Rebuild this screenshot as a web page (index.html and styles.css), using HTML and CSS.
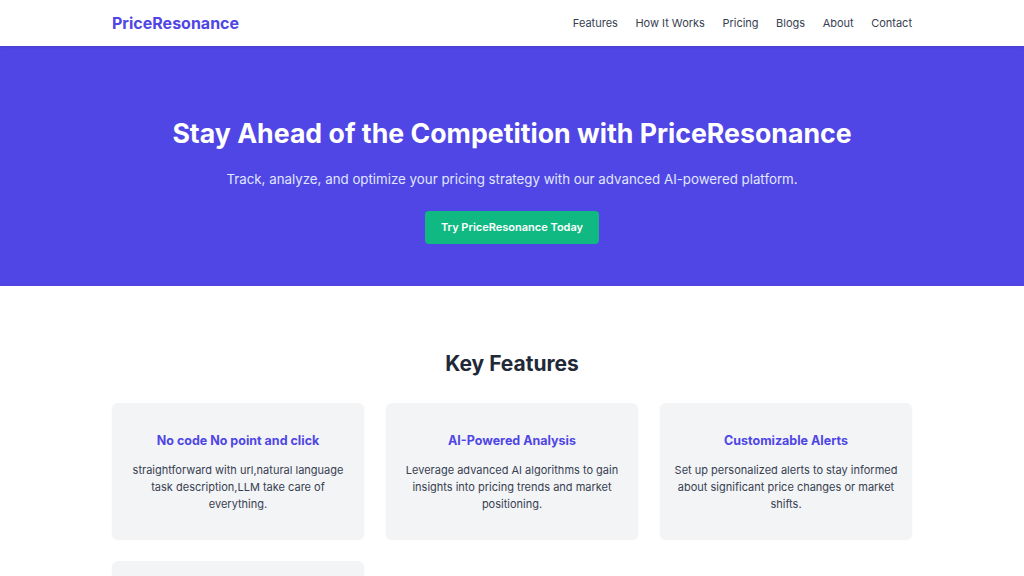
FILE: index.html
```html
<!DOCTYPE html>
<html lang="en">
<head>
  <meta charset="UTF-8">
  <meta name="viewport" content="width=device-width, initial-scale=1.0">
  <title>PriceResonance</title>
  <link rel="stylesheet" href="styles.css">
</head>
<body>
  <header class="site-header">
    <div class="container nav-bar">
      <a class="logo" href="#">PriceResonance</a>
      <nav class="nav-links">
        <a href="#">Features</a>
        <a href="#">How It Works</a>
        <a href="#">Pricing</a>
        <a href="#">Blogs</a>
        <a href="#">About</a>
        <a href="#">Contact</a>
      </nav>
    </div>
  </header>

  <section class="hero">
    <h1>Stay Ahead of the Competition with PriceResonance</h1>
    <p>Track, analyze, and optimize your pricing strategy with our advanced AI-powered platform.</p>
    <a class="cta-btn" href="#">Try PriceResonance Today</a>
  </section>

  <section class="features">
    <div class="container">
      <h2>Key Features</h2>
      <div class="feature-grid">
        <div class="feature-card">
          <h3>No code No point and click</h3>
          <p>straightforward with url,natural language task description,LLM take care of everything.</p>
        </div>
        <div class="feature-card">
          <h3>AI-Powered Analysis</h3>
          <p>Leverage advanced AI algorithms to gain insights into pricing trends and market positioning.</p>
        </div>
        <div class="feature-card">
          <h3>Customizable Alerts</h3>
          <p>Set up personalized alerts to stay informed about significant price changes or market shifts.</p>
        </div>
        <div class="feature-card">
          <h3>Competitor Tracking</h3>
          <p>Monitor competitor prices across channels and get a clear view of the market.</p>
        </div>
      </div>
    </div>
  </section>
</body>
</html>
```

FILE: styles.css
```css
* {
  box-sizing: border-box;
}
body {
  margin: 0;
  font-family: Inter, "Noto Sans", sans-serif;
  color: #374151;
  background-color: #fff;
}
a {
  text-decoration: none;
}
.container {
  max-width: 800px;
  margin: 0 auto;
}
.site-header {
  background-color: #fff;
  box-shadow: 0 1px 3px rgba(0, 0, 0, 0.12);
  position: relative;
  z-index: 1;
}
.nav-bar {
  height: 46px;
  display: flex;
  justify-content: space-between;
  align-items: center;
}
.logo {
  font-size: 16px;
  font-weight: 700;
  color: #4f46e5;
}
.nav-links {
  display: flex;
  gap: 17.5px;
}
.nav-links a {
  font-size: 11px;
  color: #374151;
}
.hero {
  background-color: #4f46e5;
  color: #fff;
  text-align: center;
  height: 240px;
  padding-top: 70px;
}
.hero h1 {
  margin: 0;
  font-size: 26.7px;
  font-weight: 700;
  line-height: 34px;
}
.hero p {
  margin: 20px 0 0;
  font-size: 13.3px;
  line-height: 18px;
  color: #e0e7ff;
}
.cta-btn {
  display: inline-block;
  margin-top: 23px;
  padding: 0 16px;
  height: 33px;
  line-height: 33px;
  background-color: #10b981;
  color: #fff;
  font-size: 11px;
  font-weight: 600;
  border-radius: 4px;
}
.features {
  padding-top: 64px;
}
.features h2 {
  margin: 0 0 25px;
  text-align: center;
  font-size: 21px;
  font-weight: 700;
  color: #1f2937;
  line-height: 28px;
}
.feature-grid {
  display: grid;
  grid-template-columns: repeat(3, 1fr);
  gap: 22px;
}
.feature-card {
  background-color: #f3f4f6;
  border-radius: 6px;
  box-shadow: 0 1px 2px rgba(0, 0, 0, 0.06);
  padding: 30px 14px 26px;
  text-align: center;
  min-height: 136px;
}
.feature-card h3 {
  margin: 0 0 13px;
  font-size: 12.5px;
  font-weight: 700;
  color: #4f46e5;
  line-height: 16px;
}
.feature-card p {
  margin: 0;
  font-size: 11px;
  line-height: 17px;
  color: #374151;
}
```
